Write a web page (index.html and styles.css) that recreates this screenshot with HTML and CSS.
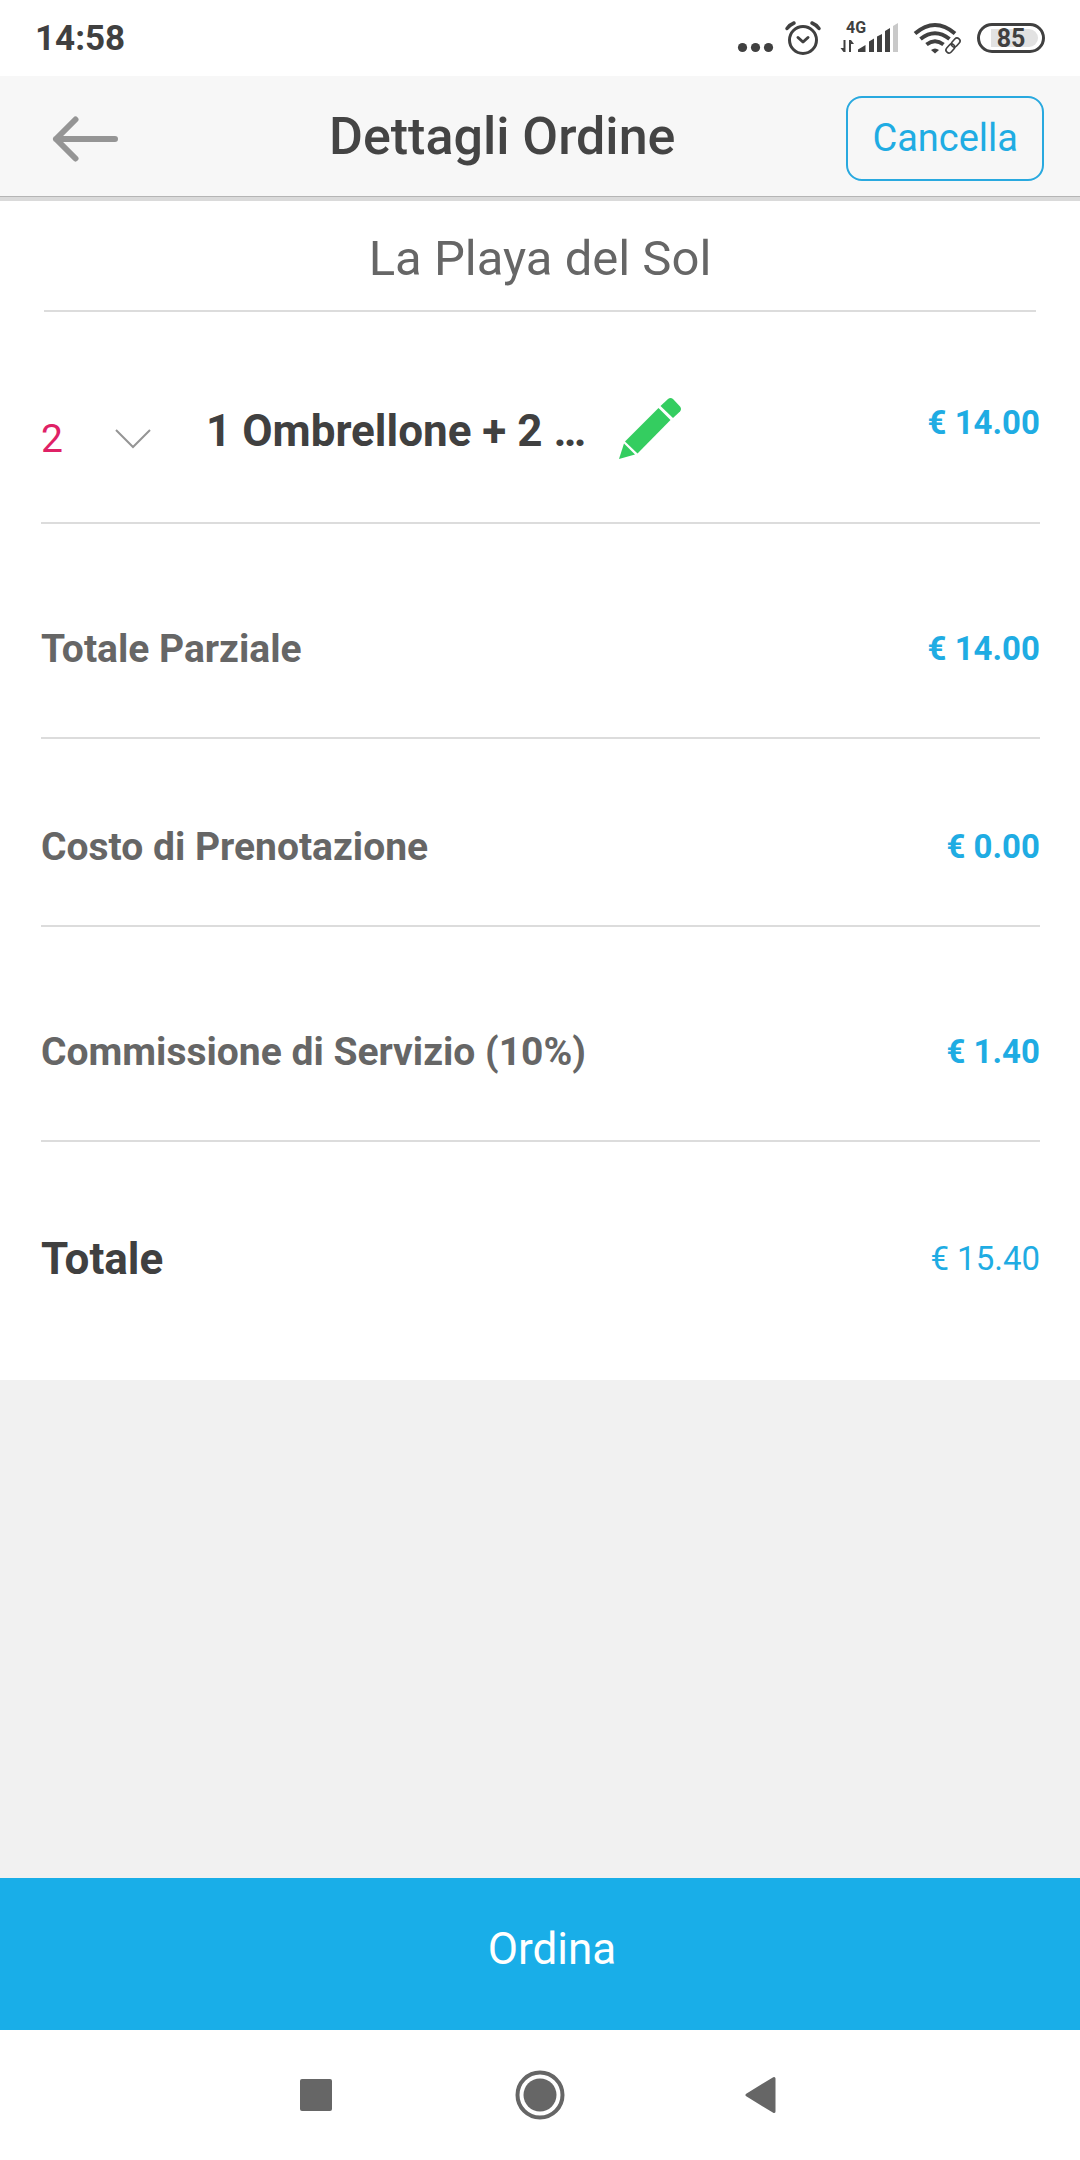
FILE: index.html
```html
<!DOCTYPE html>
<html lang="it">
<head>
  <meta charset="UTF-8" />
  <meta name="viewport" content="width=device-width, initial-scale=1.0" />
  <title>Dettagli Ordine</title>
  <link rel="stylesheet" href="styles.css">
</head>
<body>
  <div class="status-bar">
    <span class="clock">14:58</span>
    <div class="status-icons">
      <svg width="310" height="40" viewBox="736 18 310 40" fill="#404040">
        <circle cx="742.5" cy="47.5" r="4.6" />
        <circle cx="755.5" cy="47.5" r="4.6" />
        <circle cx="768.5" cy="47.5" r="4.6" />
        <!-- alarm -->
        <g fill="none" stroke="#404040" stroke-width="3" stroke-linecap="round" stroke-linejoin="round">
          <circle cx="803" cy="40" r="13.5" />
          <path d="M798 37.500l5 4.500 5-4.500" />
          <path d="M787 28.500q3-4 7-5.500M819 28.500q-3-4-7-5.500" stroke-width="3.500" />
        </g>
        <!-- signal -->
        <text class="net" x="846" y="33">4G</text>
        <path d="M843.500 40h2v12h-2l-3-4h3zM849 52V40h2l3 4h-3v8z" />
        <path d="M858 52v-2.500l7.500-4.500v7zM869 41.500l5-3V52h-5zM877 36.500l5-2.500v18h-5zM885 31l5-3v24h-5z" />
        <path d="M893 26l5-3v29h-5z" fill="#c9c9c9" />
        <!-- wifi -->
        <g fill="none" stroke="#404040" stroke-width="4">
          <path d="M915 33.500q20-17 40 0" />
          <path d="M920.500 39q14.500-11.500 29 0" />
          <path d="M926.500 44.500q8.500-6.500 17 0" />
        </g>
        <path d="M931 50q4-3 8 0l-4 3.500z" />
        <g fill="none" transform="rotate(-48 953 45.500)">
          <path d="M944 45.500h18" stroke="#fff" stroke-width="10" />
          <g stroke="#404040" stroke-width="1.600">
            <rect x="944" y="42.500" width="10" height="6" rx="3" />
            <rect x="952" y="42.500" width="10" height="6" rx="3" />
          </g>
        </g>
        <!-- battery -->
        <path d="M991 29h38a9 9 0 0 1 0 18h-38z" fill="#e2e2e2" />
        <rect x="978.500" y="24.500" width="65" height="27" rx="13.500" fill="none" stroke="#404040" stroke-width="3" />
        <text class="battery" x="1011" y="47" text-anchor="middle">85</text>
      </svg>
    </div>
  </div>

  <header class="header">
    <button class="back" type="button" aria-label="Indietro">
      <svg width="66" height="46" viewBox="0 0 66 46" fill="none" stroke="#959595" stroke-width="6" stroke-linecap="round" stroke-linejoin="round">
        <path d="M63 23H4M23.500 3.500L4 23l19.500 19.500" />
      </svg>
    </button>
    <h1 class="header-title">Dettagli Ordine</h1>
    <button class="cancel" type="button">Cancella</button>
  </header>

  <main class="order">
    <h2 class="place">La Playa del Sol</h2>

    <div class="item">
      <label class="qty">
        <select class="qty-select" aria-label="Quantità">
          <option>1</option>
          <option selected>2</option>
          <option>3</option>
        </select>
        <svg width="36" height="20" viewBox="0 0 36 20" fill="none" stroke="#959595" stroke-width="2">
          <path d="M1 1l17 17L35 1" />
        </svg>
      </label>
      <span class="item-name">1 Ombrellone + 2 …</span>
      <button class="edit" type="button" aria-label="Modifica">
        <svg width="62" height="62" viewBox="0 0 62 62" fill="#34cd60">
          <path d="M41.500 8l7.500-7q2.500-2 5 0l7 7.500q2 2.500 0 5l-7 6.500z" />
          <path d="M39.500 10l12 12L18.500 55.500 6 43.500z" />
          <path d="M5 45.500L16 56.500 0 61z" />
        </svg>
      </button>
      <span class="price">€ 14.00</span>
    </div>

    <dl class="totals">
      <div class="row">
        <dt>Totale Parziale</dt>
        <dd class="price">€ 14.00</dd>
      </div>
      <div class="row row-compact">
        <dt>Costo di Prenotazione</dt>
        <dd class="price">€ 0.00</dd>
      </div>
      <div class="row">
        <dt>Commissione di Servizio (10%)</dt>
        <dd class="price">€ 1.40</dd>
      </div>
      <div class="row row-total">
        <dt>Totale</dt>
        <dd class="price">€ 15.40</dd>
      </div>
    </dl>
  </main>

  <button class="submit" type="button">Ordina</button>

  <nav class="system-nav">
    <button type="button" aria-label="Recenti">
      <svg width="50" height="50" viewBox="0 0 50 50" fill="#666">
        <rect x="9" y="9" width="32" height="32" rx="2" />
      </svg>
    </button>
    <button type="button" aria-label="Home">
      <svg width="50" height="50" viewBox="0 0 50 50" fill="#666">
        <circle cx="25" cy="25" r="16.500" />
        <circle cx="25" cy="25" r="22.500" fill="none" stroke="#666" stroke-width="4" />
      </svg>
    </button>
    <button type="button" aria-label="Indietro">
      <svg width="50" height="50" viewBox="0 0 50 50" fill="#666" stroke="#666" stroke-width="3" stroke-linejoin="round">
        <path d="M8 25L35 8.500v33z" />
      </svg>
    </button>
  </nav>
</body>
</html>
```
FILE: styles.css
```css
* {
  box-sizing: border-box;
}
body {
  margin: 0;
  min-height: 100vh;
  display: flex;
  flex-direction: column;
  font-family: Roboto, "Liberation Sans", sans-serif;
  background: #f1f1f1;
  color: #666;
}
button,
select {
  font: inherit;
  background: none;
  border: none;
  padding: 0;
  cursor: pointer;
}
svg {
  display: block;
}

/* status bar */
.status-bar {
  display: flex;
  justify-content: space-between;
  align-items: center;
  height: 76px;
  padding: 0 34px 0 35px;
  background: #fff;
  color: #404040;
}
.clock {
  font-size: 35px;
  font-weight: bold;
  line-height: 44px;
  padding-top: 2px;
}
.net {
  font-size: 16px;
  font-weight: bold;
}
.battery {
  font-size: 25px;
  font-weight: bold;
}

/* header */
.header {
  display: flex;
  justify-content: space-between;
  align-items: center;
  height: 125px;
  padding: 4px 36px 0 52px;
  background: #f7f7f7;
  border-bottom: 4px solid #dadada;
  box-shadow: inset 0 -1px #b5b5b5;
}
.header-title {
  margin: 0;
  font-size: 52px;
  font-weight: 500;
  line-height: 64px;
  padding-bottom: 4px;
  padding-left: 40px;
  color: #444;
}
.cancel {
  height: 85px;
  padding: 0 24px 2px;
  border: 2px solid #29a9df;
  border-radius: 16px;
  font-size: 38px;
  color: #1face3;
}

/* order */
.order {
  background: #fff;
}
.place {
  margin: 0 44px;
  padding: 27px 0 21px;
  border-bottom: 2px solid #dcdcdc;
  font-size: 49px;
  font-weight: normal;
  line-height: 61px;
  text-align: center;
}
.item {
  display: flex;
  align-items: flex-start;
  margin: 0 40px 0 41px;
  padding: 86px 0 42px;
  border-bottom: 2px solid #dcdcdc;
}
.qty {
  display: flex;
  align-items: center;
  width: 165px;
  height: 82px;
}
.qty-select {
  appearance: none;
  width: 74px;
  font-size: 39px;
  line-height: 48px;
  color: #df2166;
}
.item-name {
  font-size: 44px;
  font-weight: bold;
  line-height: 66px;
  color: #404040;
}
.edit {
  margin-left: 33px;
}
.price {
  margin: 0 0 0 auto;
  font-size: 33px;
  font-weight: bold;
  line-height: 50px;
  color: #1face3;
}
.totals {
  margin: 0 40px 0 41px;
}
.row {
  display: flex;
  align-items: center;
  padding: 100px 0 63px;
  border-bottom: 2px solid #dcdcdc;
  font-size: 39px;
  font-weight: bold;
  line-height: 50px;
}
.row-compact {
  padding: 83px 0 53px;
}
.row-total {
  padding: 92px 0 96px;
  border-bottom: none;
  font-size: 44px;
  color: #404040;
}
.row-total .price {
  font-weight: normal;
}

/* bottom */
.submit {
  height: 152px;
  margin-top: auto;
  padding: 0 0 10px 24px;
  background: #19aee8;
  font-size: 44px;
  color: #fff;
}
.system-nav {
  display: flex;
  justify-content: center;
  align-items: center;
  gap: 174px;
  height: 130px;
  background: #fff;
}
```
